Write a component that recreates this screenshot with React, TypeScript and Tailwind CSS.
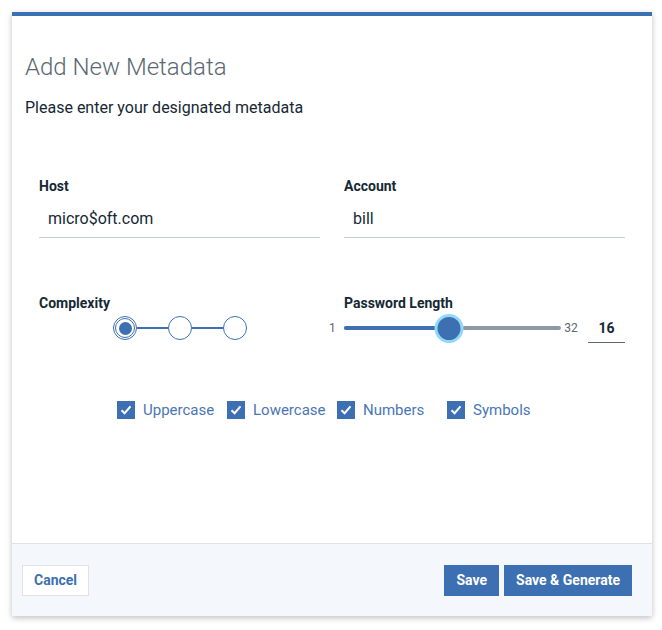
import { useState } from "react";

function Checkbox({ label, on, toggle }: { label: string; on: boolean; toggle: () => void }) {
  return (
    <label className="flex w-[110px] cursor-pointer items-center gap-2" onClick={toggle}>
      <span className="flex h-[18px] w-[18px] items-center justify-center bg-[#3d70b2]">
        {on && (
          <svg width="14" height="14" viewBox="0 0 14 14" fill="none">
            <path d="M2.5 7.2 L5.6 10.2 L11.5 3.4" stroke="white" strokeWidth="2" />
          </svg>
        )}
      </span>
      <span className="text-[15px] text-[#4a76b4]">{label}</span>
    </label>
  );
}

export default function App() {
  const [host, setHost] = useState("micro$oft.com");
  const [account, setAccount] = useState("bill");
  const [len, setLen] = useState(16);
  const [level, setLevel] = useState(0);
  const [opts, setOpts] = useState({ Uppercase: true, Lowercase: true, Numbers: true, Symbols: true });

  const pct = (len - 1) / 31;

  return (
    <div className="min-h-screen bg-white pl-[12px] pt-[12px] font-['Roboto',sans-serif]">
      <div className="flex w-[640px] flex-col border-t-4 border-[#3d70b2] bg-white shadow-[0_2px_6px_rgba(0,0,0,0.25)]">
        <div className="h-[527px] px-[13px] pt-[35px]">
          <h2 className="text-[24px] leading-[32px] font-light text-[#5a6872]">Add New Metadata</h2>
          <p className="mt-[13px] text-[16px] leading-[24px] text-[#152934]">Please enter your designated metadata</p>

          <div className="mt-[56px] grid grid-cols-2 gap-x-[24px] px-[14px]">
            <div>
              <div className="text-[14px] leading-[20px] font-bold text-[#152934]">Host</div>
              <input
                value={host}
                onChange={(e) => setHost(e.target.value)}
                className="mt-[4px] h-[38px] w-full border-b border-[#c7ccd1] px-[9px] text-[16px] text-[#152934] outline-none"
              />
            </div>
            <div>
              <div className="text-[14px] leading-[20px] font-bold text-[#152934]">Account</div>
              <input
                value={account}
                onChange={(e) => setAccount(e.target.value)}
                className="mt-[4px] h-[38px] w-full border-b border-[#c7ccd1] px-[9px] text-[16px] text-[#152934] outline-none"
              />
            </div>

            <div className="mt-[55px]">
              <div className="text-[14px] leading-[20px] font-bold text-[#152934]">Complexity</div>
              <div className="ml-[74px] mt-[3px] flex items-center">
                {[0, 1, 2].map((i) => (
                  <div key={i} className="flex items-center">
                    {i > 0 && <div className="h-[2px] w-[31px] bg-[#3d70b2]" />}
                    <button
                      onClick={() => setLevel(i)}
                      className={`flex h-[24px] w-[24px] items-center justify-center rounded-full border border-[#3d70b2] bg-white ${level === i ? "p-[1px]" : ""}`}
                    >
                      {level === i && (
                        <span className="flex h-[20px] w-[20px] items-center justify-center rounded-full border border-[#3d70b2]">
                          <span className="h-[13px] w-[13px] rounded-full bg-[#3d70b2]" />
                        </span>
                      )}
                    </button>
                  </div>
                ))}
              </div>
            </div>

            <div className="mt-[55px]">
              <div className="text-[14px] leading-[20px] font-bold text-[#152934]">Password Length</div>
              <div className="-ml-[15px] flex items-center">
                <span className="w-[15px] text-[12px] text-[#5a6872]">1</span>
                <div className="relative h-[30px] w-[220px]">
                  <div className="absolute left-0 right-0 top-[13px] h-[4px] rounded-full bg-[#8c9ba5]" />
                  <div className="absolute left-0 top-[13px] h-[4px] rounded-full bg-[#3d70b2]" style={{ width: `${pct * 100}%` }} />
                  <div
                    className="absolute top-[1px] h-[29px] w-[29px] -translate-x-1/2 rounded-full border-[3px] border-[#93d8f8] bg-[#3d70b2]"
                    style={{ left: `${pct * 100}%` }}
                  />
                  <input
                    type="range"
                    min={1}
                    max={32}
                    value={len}
                    onChange={(e) => setLen(parseInt(e.target.value))}
                    className="absolute inset-0 w-full cursor-pointer opacity-0"
                  />
                </div>
                <span className="ml-[3px] w-[21px] text-[12px] text-[#5a6872]">32</span>
                <input
                  value={len}
                  onChange={(e) => setLen(Math.max(1, Math.min(32, parseInt(e.target.value) || 1)))}
                  className="ml-[3px] mt-0 h-[30px] w-[37px] border-b border-[#5a6872] text-center text-[14px] font-bold text-[#152934] outline-none"
                />
              </div>
            </div>
          </div>

          <div className="mt-[56px] flex pl-[92px]">
            {(Object.keys(opts) as Array<keyof typeof opts>).map((k) => (
              <Checkbox key={k} label={k} on={opts[k]} toggle={() => setOpts((o) => ({ ...o, [k]: !o[k] }))} />
            ))}
          </div>
        </div>

        <div className="flex h-[73px] items-center justify-between border-t border-[#dfe3e6] bg-[#f4f7fb] pl-[10px] pr-[20px]">
          <button className="h-[31px] border border-[#dfe3e6] bg-white px-[11px] text-[14px] font-bold text-[#3d70b2]">Cancel</button>
          <div className="flex gap-[5px]">
            <button className="h-[31px] bg-[#3d70b2] px-[12px] text-[14px] font-bold text-white">Save</button>
            <button className="h-[31px] bg-[#3d70b2] px-[12px] text-[14px] font-bold text-white">Save &amp; Generate</button>
          </div>
        </div>
      </div>
    </div>
  );
}
